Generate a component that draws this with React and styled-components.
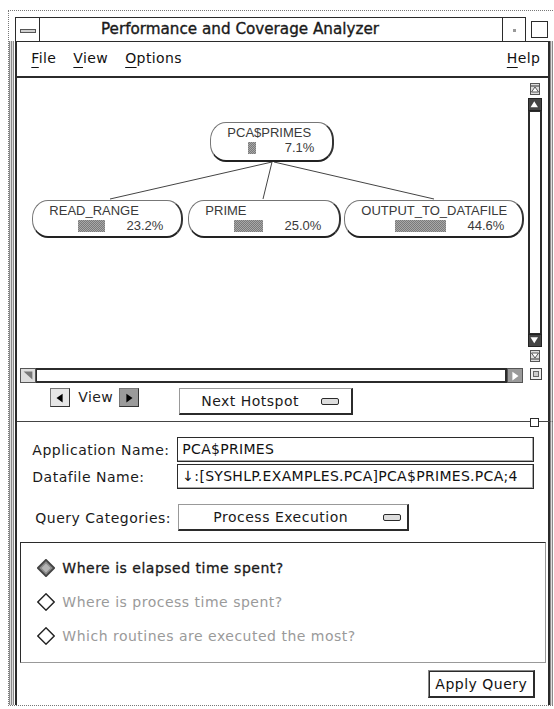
import React from "react";
import styled, { createGlobalStyle } from "styled-components";

const DARK = "#2b2b2b";
const hatch = "repeating-linear-gradient(90deg, #6e6e6e 0 1px, #d4d4d4 1px 2px)";

const GlobalStyle = createGlobalStyle`
  html, body { margin: 0; padding: 0; background: #fff; }
  body { font-family: "DejaVu Sans", sans-serif; color: #222; }
  * { box-sizing: border-box; }
`;

const nodes = [
  { name: "PCA$PRIMES", pct: 7.1, x: 193, y: 44, w: 124, h: 40 },
  { name: "READ_RANGE", pct: 23.2, x: 15, y: 122, w: 151, h: 38 },
  { name: "PRIME", pct: 25.0, x: 171, y: 122, w: 153, h: 38 },
  { name: "OUTPUT_TO_DATAFILE", pct: 44.6, x: 327, y: 122, w: 180, h: 38 },
];

const edges = [
  [255, 84, 93, 121],
  [255, 84, 246, 121],
  [257, 84, 417, 121],
];

const queries = [
  { text: "Where is elapsed time spent?", on: true },
  { text: "Where is process time spent?" },
  { text: "Which routines are executed the most?" },
];

function Mn({ children }) {
  return (
    <>
      <u>{children[0]}</u>
      {children.slice(1)}
    </>
  );
}

function Arrow({ dir, fill = "#000" }) {
  const pts = {
    left: "11,3 11,13 4,8",
    right: "5,3 5,13 12,8",
    up: "7,3 12,11 2,11",
    down: "2,3 12,3 7,11",
  }[dir];
  return (
    <svg width="14" height="14" viewBox="0 0 16 16">
      <polygon points={pts} fill={fill} />
    </svg>
  );
}

function Diamond({ on }) {
  return (
    <svg width="18" height="18" viewBox="0 0 18 18">
      <polygon
        points="9,0.8 17.2,9 9,17.2 0.8,9"
        fill={on ? "#8a8a8a" : "#fff"}
        stroke={on ? "#444" : "#222"}
        strokeWidth={on ? 1.8 : 1.4}
      />
      {on && <polygon points="9,4.5 13.5,9 9,13.5 4.5,9" fill="#b5b5b5" />}
    </svg>
  );
}

export default function App() {
  return (
    <Screen>
      <GlobalStyle />
      <Frame>
        <TitleRow>
          <TitleBar>
            <MenuBtn>
              <MenuGlyph />
            </MenuBtn>
            <Title>Performance and Coverage Analyzer</Title>
            <MinBtn>
              <Dot />
            </MinBtn>
          </TitleBar>
          <MaxBtn />
        </TitleRow>
        <Body>
          <Stripe $w={6} />
          <Window>
            <MenuBar>
              <MenuItem><Mn>File</Mn></MenuItem>
              <MenuItem><Mn>View</Mn></MenuItem>
              <MenuItem><Mn>Options</Mn></MenuItem>
              <Spacer />
              <MenuItem><Mn>Help</Mn></MenuItem>
            </MenuBar>

            <GraphArea>
              <Canvas>
                <Edges width="511" height="290">
                  {edges.map(([x1, y1, x2, y2], i) => (
                    <line key={i} x1={x1} y1={y1} x2={x2} y2={y2} stroke="#444" strokeWidth="1" />
                  ))}
                </Edges>
                {nodes.map((n) => (
                  <Node key={n.name} $x={n.x} $y={n.y} $w={n.w} $h={n.h}>
                    <NodeName>{n.name}</NodeName>
                    <NodeRow>
                      <Bar style={{ width: Math.round(n.pct * 1.15) }} />
                      <Pct>{n.pct.toFixed(1)}%</Pct>
                    </NodeRow>
                  </Node>
                ))}
              </Canvas>

              <VScroll>
                <EndBtn>
                  <svg width="10" height="12" viewBox="0 0 10 12">
                    <rect x="0.5" y="0.5" width="9" height="11" fill="#ddd" stroke="#555" />
                    <line x1="1" y1="3" x2="9" y2="3" stroke="#333" />
                    <polygon points="5,4 8.5,9 1.5,9" fill="#fff" stroke="#333" strokeWidth="0.8" />
                  </svg>
                </EndBtn>
                <ScrollArrow>
                  <Arrow dir="up" fill="#fff" />
                </ScrollArrow>
                <VThumb />
                <ScrollArrow>
                  <Arrow dir="down" fill="#fff" />
                </ScrollArrow>
                <EndBtn>
                  <svg width="10" height="12" viewBox="0 0 10 12">
                    <rect x="0.5" y="0.5" width="9" height="11" fill="#ddd" stroke="#555" />
                    <line x1="1" y1="9" x2="9" y2="9" stroke="#333" />
                    <polygon points="1.5,3 8.5,3 5,8" fill="#fff" stroke="#333" strokeWidth="0.8" />
                  </svg>
                </EndBtn>
              </VScroll>

              <HScroll>
                <HArrow $light>
                  <svg width="16" height="13" viewBox="0 0 16 13">
                    <polygon points="13,2 13,11 3,2" fill="#777" />
                  </svg>
                </HArrow>
                <HThumb />
                <HArrow>
                  <Arrow dir="right" fill="#fff" />
                </HArrow>
              </HScroll>

              <CornerCell>
                <CornerBox />
              </CornerCell>
            </GraphArea>

            <ControlRow>
              <ArrowBtn>
                <Arrow dir="left" />
              </ArrowBtn>
              <ViewLabel>View</ViewLabel>
              <ArrowBtn $pressed>
                <Arrow dir="right" />
              </ArrowBtn>
              <OptionBtn $w={174} $ml={40} $pl={21}>
                Next Hotspot
                <Indicator $ml={22} />
              </OptionBtn>
            </ControlRow>

            <Sash>
              <SashHandle />
            </Sash>

            <Form>
              <FieldRow>
                <Label>Application Name:</Label>
                <Field>PCA$PRIMES</Field>
              </FieldRow>
              <FieldRow>
                <Label>Datafile Name:</Label>
                <Field>↓:[SYSHLP.EXAMPLES.PCA]PCA$PRIMES.PCA;4</Field>
              </FieldRow>
              <QueryRow>
                <Label $indent={3} $w={143}>Query Categories:</Label>
                <OptionBtn $w={231} $ml={0} $pl={34}>
                  Process Execution
                  <Indicator $ml={35} />
                </OptionBtn>
              </QueryRow>
            </Form>

            <RadioBox>
              {queries.map((q) => (
                <RadioItem key={q.text} $on={q.on}>
                  <Diamond on={q.on} />
                  <span>{q.text}</span>
                </RadioItem>
              ))}
            </RadioBox>

            <Footer>
              <PushBtn>Apply Query</PushBtn>
            </Footer>
          </Window>
          <Stripe $w={3} />
        </Body>
      </Frame>
    </Screen>
  );
}

const Screen = styled.div`
  width: 554px;
  height: 709px;
  overflow: hidden;
  background: #fff;
  padding: 10px 0 0 8px;
`;

const Frame = styled.div`
  width: 545px;
  height: 696px;
  display: flex;
  flex-direction: column;
  border-top: 1px dotted #777;
  border-left: 1px dotted #777;
  border-bottom: 1px dotted #777;
`;

const TitleRow = styled.div`
  display: flex;
  align-items: flex-end;
  height: 30px;
  padding-left: 6px;
`;

const TitleBar = styled.div`
  width: 511px;
  height: 24px;
  display: flex;
  border: 1px solid ${DARK};
  border-bottom: none;
`;

const MenuBtn = styled.div`
  width: 24px;
  border-right: 1px solid ${DARK};
  display: flex;
  align-items: center;
  justify-content: center;
`;

const MenuGlyph = styled.div`
  width: 16px;
  height: 4px;
  border: 1px solid #555;
  background: #cfcfcf;
  margin-top: 2px;
`;

const Title = styled.div`
  flex: 1;
  text-align: center;
  font-family: "DejaVu Sans", sans-serif;
  font-size: 15.2px;
  line-height: 23px;
  color: #1a1a1a;
  -webkit-text-stroke: 0.35px #1a1a1a;
  padding-right: 62px;
  white-space: nowrap;
`;

const MinBtn = styled.div`
  width: 23px;
  border-left: 1px solid ${DARK};
  display: flex;
  align-items: center;
  justify-content: center;
`;

const Dot = styled.div`
  width: 3px;
  height: 3px;
  background: #999;
  margin-top: 2px;
`;

const MaxBtn = styled.div`
  width: 17px;
  height: 17px;
  margin: 0 0 3px 5px;
  border: 1px solid ${DARK};
`;

const Body = styled.div`
  flex: 1;
  display: flex;
`;

const Stripe = styled.div`
  width: ${(p) => p.$w}px;
  margin-right: ${(p) => (p.$w > 4 ? 1 : 0)}px;
  background: ${hatch};
  opacity: 0.8;
`;

const Window = styled.div`
  width: 535px;
  display: flex;
  flex-direction: column;
  border-left: 2px solid ${DARK};
  border-right: 2px solid ${DARK};
`;

const MenuBar = styled.div`
  height: 37px;
  display: flex;
  align-items: center;
  gap: 17px;
  padding: 0 8px 2px 14px;
  border-top: 1px solid ${DARK};
  border-bottom: 2px solid ${DARK};
  font-size: 14px;
  letter-spacing: 0.4px;
  color: #111;
  u {
    text-decoration-thickness: 1px;
    text-underline-offset: 4px;
  }
`;

const MenuItem = styled.span``;

const Spacer = styled.div`
  flex: 1;
`;

const GraphArea = styled.div`
  display: grid;
  grid-template-columns: 511px 20px;
  grid-template-rows: 290px 18px;
`;

const Canvas = styled.div`
  position: relative;
  overflow: hidden;
`;

const Edges = styled.svg`
  position: absolute;
  left: 0;
  top: 0;
`;

const Node = styled.div`
  position: absolute;
  left: ${(p) => p.$x}px;
  top: ${(p) => p.$y}px;
  width: ${(p) => p.$w}px;
  height: ${(p) => p.$h}px;
  background: #fff;
  border: 1px solid #777;
  border-bottom: 2px solid #222;
  border-right: 2px solid #333;
  border-radius: 16px / 18px;
  padding: 3px 18px 0 16px;
  font-family: "Liberation Sans", Arial, sans-serif;
  font-size: 13px;
  color: #3a3a3a;
`;

const NodeName = styled.div`
  line-height: 14px;
  white-space: nowrap;
`;

const NodeRow = styled.div`
  display: flex;
  justify-content: flex-end;
  align-items: center;
  margin-top: 2px;
  height: 12px;
`;

const Bar = styled.div`
  height: 12px;
  background: repeating-conic-gradient(#7a7a7a 0 25%, #a8a8a8 0 50%) 0 0 / 2px 2px;
`;

const Pct = styled.span`
  width: 58px;
  text-align: right;
  line-height: 12px;
`;

const VScroll = styled.div`
  display: flex;
  flex-direction: column;
  align-items: flex-start;
  padding: 5px 0 6px 0;
`;

const EndBtn = styled.div`
  height: 12px;
  margin: 0 0 3px 2px;
  display: flex;
  &:last-child {
    margin: 3px 0 0 2px;
  }
`;

const ScrollArrow = styled.div`
  width: 14px;
  height: 13px;
  background: #444;
  border: 1px solid #222;
  display: flex;
  align-items: center;
  justify-content: center;
  svg {
    width: 12px;
    height: 12px;
  }
`;

const VThumb = styled.div`
  flex: 1;
  width: 14px;
  background: #fff;
  border: 2px solid ${DARK};
  border-top: 1px solid ${DARK};
  border-bottom: 1px solid ${DARK};
`;

const HScroll = styled.div`
  display: flex;
  padding: 0 5px 3px 3px;
`;

const HArrow = styled.div`
  width: 16px;
  background: ${(p) => (p.$light ? "#ddd" : "#9a9a9a")};
  border: 1px solid #555;
  display: flex;
  align-items: center;
  justify-content: center;
`;

const HThumb = styled.div`
  flex: 1;
  background: #fff;
  border-top: 2px solid ${DARK};
  border-bottom: 2px solid ${DARK};
  border-left: 1px solid ${DARK};
  border-right: 2px solid ${DARK};
`;

const CornerCell = styled.div`
  padding: 0 0 0 2px;
`;

const CornerBox = styled.div`
  width: 12px;
  height: 12px;
  border: 1px solid #444;
  background: #ccc;
  box-shadow: inset 0 0 0 2px #eee, inset 0 0 0 3px #666;
`;

const ControlRow = styled.div`
  height: 32px;
  display: flex;
  align-items: flex-start;
  padding: 2px 0 0 33px;
`;

const ArrowBtn = styled.div`
  width: 20px;
  height: 19px;
  display: flex;
  align-items: center;
  justify-content: center;
  background: ${(p) => (p.$pressed ? "#9a9a9a" : "#e6e6e6")};
  border: 1px solid #777;
  border-right-color: #333;
  border-bottom-color: #333;
`;

const ViewLabel = styled.span`
  margin: 0 6px 0 8px;
  font-size: 14px;
  line-height: 19px;
  letter-spacing: 0.4px;
`;

const OptionBtn = styled.div`
  width: ${(p) => p.$w}px;
  height: 27px;
  margin-left: ${(p) => p.$ml}px;
  padding-left: ${(p) => p.$pl}px;
  display: flex;
  align-items: center;
  border: 1px solid #999;
  border-right: 2px solid ${DARK};
  border-bottom: 2px solid ${DARK};
  font-size: 14px;
  letter-spacing: 0.5px;
  color: #1a1a1a;
  white-space: nowrap;
`;

const Indicator = styled.span`
  width: 18px;
  height: 7px;
  margin-left: ${(p) => p.$ml}px;
  border: 1.5px solid ${DARK};
  border-radius: 2px;
  background: #ddd;
`;

const Sash = styled.div`
  position: relative;
  height: 8px;
  margin-right: -5px;
  display: flex;
  align-items: center;
  justify-content: flex-end;
  padding-right: 14px;
  &::before {
    content: "";
    position: absolute;
    left: 0;
    right: 0;
    top: 3px;
    border-top: 1px solid #444;
  }
`;

const SashHandle = styled.div`
  position: relative;
  width: 9px;
  height: 9px;
  border: 1px solid ${DARK};
  background: #fff;
`;

const Form = styled.div`
  padding: 11px 14px 0 15px;
  display: flex;
  flex-direction: column;
  gap: 2px;
`;

const FieldRow = styled.div`
  display: flex;
  align-items: center;
  height: 25px;
`;

const Label = styled.span`
  width: ${(p) => p.$w || 145}px;
  margin-left: ${(p) => p.$indent || 0}px;
  font-size: 14px;
  letter-spacing: 0.5px;
  color: #1a1a1a;
  white-space: nowrap;
`;

const Field = styled.div`
  flex: 1;
  height: 25px;
  padding-left: 4px;
  border: 1px solid ${DARK};
  box-shadow: inset -1px -1px 0 #aaa;
  font-size: 14px;
  line-height: 23px;
  letter-spacing: 0.3px;
  white-space: nowrap;
  overflow: hidden;
  color: #111;
`;

const QueryRow = styled.div`
  display: flex;
  align-items: center;
  margin-top: 13px;
`;

const RadioBox = styled.div`
  margin: 11px 2px 0 3px;
  height: 121px;
  padding-top: 8px;
  border-top: 1px solid ${DARK};
  border-left: 1px solid ${DARK};
  border-right: 1px solid #999;
  border-bottom: 1px solid #999;
`;

const RadioItem = styled.div`
  height: 34px;
  display: flex;
  align-items: center;
  gap: 7px;
  padding-left: 16px;
  font-size: 14px;
  letter-spacing: 0.5px;
  color: ${(p) => (p.$on ? "#1a1a1a" : "#9a9a9a")};
  -webkit-text-stroke: ${(p) => (p.$on ? "0.3px #1a1a1a" : "0")};
`;

const Footer = styled.div`
  display: flex;
  justify-content: flex-end;
  padding: 7px 13px 0 0;
`;

const PushBtn = styled.div`
  width: 107px;
  height: 28px;
  display: flex;
  align-items: center;
  justify-content: center;
  border: 1px solid #888;
  border-right: 2px solid ${DARK};
  border-bottom: 2px solid ${DARK};
  box-shadow: inset 1px 1px 0 ${DARK};
  font-size: 14px;
  letter-spacing: 0.5px;
  color: #111;
`;
